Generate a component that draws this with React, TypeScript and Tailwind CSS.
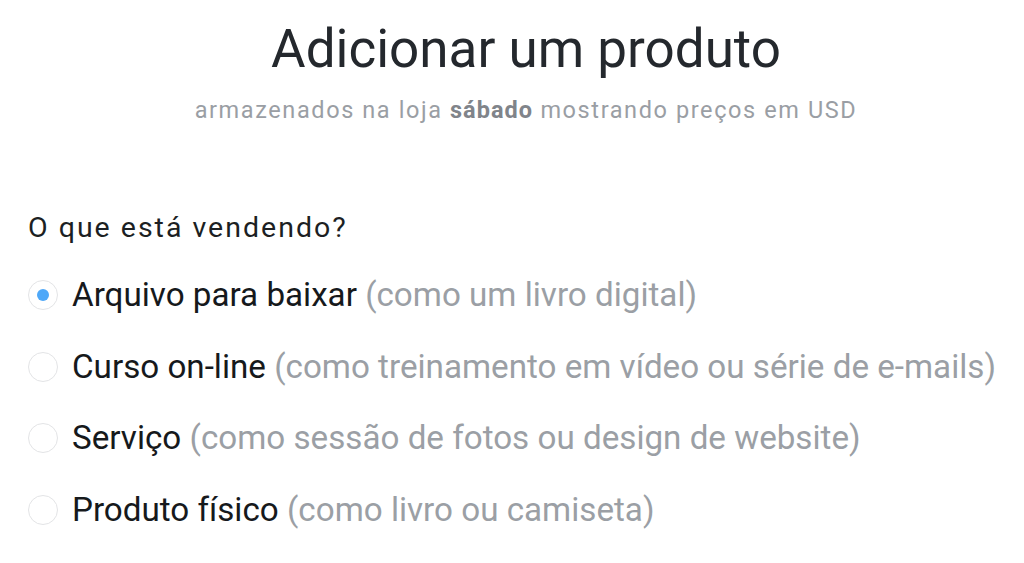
const options = [
  { label: "Arquivo para baixar", hint: "(como um livro digital)", checked: true },
  { label: "Curso on-line", hint: "(como treinamento em vídeo ou série de e-mails)", checked: false },
  { label: "Serviço", hint: "(como sessão de fotos ou design de website)", checked: false },
  { label: "Produto físico", hint: "(como livro ou camiseta)", checked: false },
];

export default function App() {
  return (
    <div className="w-[1024px] h-[563px] bg-white font-['Roboto',sans-serif] overflow-hidden">
      {/* Header */}
      <div className="flex flex-col items-center pt-[17px] pl-[28px]">
        <h1 className="text-[53px] leading-[64px] font-normal text-[#24282d] whitespace-nowrap">Adicionar um produto</h1>
        <p className="mt-[14px] text-[23.5px] leading-[30px] tracking-[1.6px] text-[#9a9ea4] whitespace-nowrap">
          armazenados na loja <span className="font-bold text-[#80848a] tracking-[1px]">sábado</span> mostrando preços em USD
        </p>
      </div>

      {/* Product type */}
      <div className="pl-[28px] mt-[87px]">
        <p className="text-[28.5px] leading-[32px] tracking-[2px] text-[#1c1f23]">O que está vendendo?</p>
        <div className="flex flex-col mt-[31px] gap-[31.5px]">
          {options.map((o) => (
            <label key={o.label} className="flex items-center gap-[14px] h-[40px] whitespace-nowrap">
              <span className="w-[30px] h-[30px] shrink-0 rounded-full border-[1.5px] border-[#e3e4e6] bg-white flex items-center justify-center">
                {o.checked && <span className="w-[12px] h-[12px] rounded-full bg-[#4ea8f8]" />}
              </span>
              <span className="text-[33.2px] leading-[40px] text-[#16191c]">
                {o.label} <span className="text-[#9b9fa5]">{o.hint}</span>
              </span>
            </label>
          ))}
        </div>
      </div>
    </div>
  );
}
